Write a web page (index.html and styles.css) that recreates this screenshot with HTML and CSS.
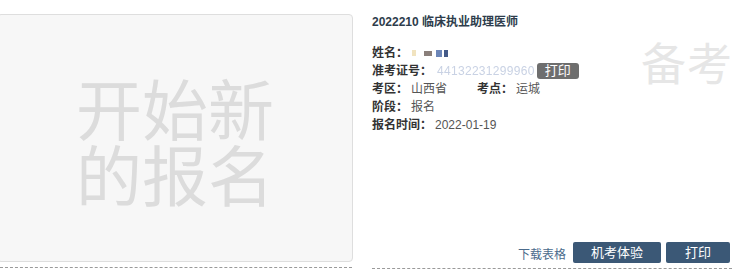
FILE: index.html
```html
<!DOCTYPE html>
<html lang="zh">
<head>
<meta charset="utf-8">
<link rel="stylesheet" href="styles.css">
</head>
<body>
<div class="page">
  <div class="left">
    <div class="newbox"><span class="newtext">开始新<br>的报名</span></div>
    <div class="dash"></div>
  </div>
  <div class="right">
    <div class="watermark">备考</div>
    <div class="title">2022210 临床执业助理医师</div>
    <div class="rows">
      <div class="row"><span class="lab">姓名：</span><span class="blur name"><i class="b1"></i><i class="b2"></i><i class="b3"></i><i class="b4"></i></span></div>
      <div class="row"><span class="lab">准考证号：</span><span class="blur idno">44132231299960</span><span class="badge">打印</span></div>
      <div class="row"><span class="lab">考区：</span><span class="val area">山西省</span><span class="lab">考点：</span><span class="val">运城</span></div>
      <div class="row"><span class="lab">阶段：</span><span class="val">报名</span></div>
      <div class="row"><span class="lab">报名时间：</span><span class="val">2022-01-19</span></div>
    </div>
    <div class="actions">
      <a class="link">下载表格</a>
      <span class="btn wide">机考体验</span>
      <span class="btn">打印</span>
    </div>
    <div class="dash"></div>
  </div>
</div>
</body>
</html>
```
FILE: styles.css
```css
html, body {
  margin: 0;
  padding: 0;
  background: #fff;
  overflow: hidden;
}
body {
  font-family: "Liberation Sans", "Noto Sans CJK SC", sans-serif;
  font-size: 12px;
  color: #333;
}
.page {
  display: grid;
  grid-template-columns: 352px 360px;
  column-gap: 20px;
  height: 271px;
}
.left {
  display: flex;
  flex-direction: column;
  padding-top: 14px;
}
.newbox {
  margin-left: -3px;
  width: 354px;
  height: 246px;
  border: 1px solid #dedede;
  border-radius: 4px;
  background: #f7f7f7;
  display: flex;
  align-items: center;
  justify-content: center;
}
.newtext {
  font-family: "Noto Sans CJK SC", sans-serif;
  font-size: 66px;
  line-height: 66px;
  color: #dcdcdc;
  margin-top: 2px;
  margin-left: 0;
}
.dash {
  margin-top: 5px;
  border-top: 1px dashed #9a9a9a;
  height: 0;
}
.left .dash { width: 352px; }
.right {
  position: relative;
  display: flex;
  flex-direction: column;
}
.watermark {
  position: absolute;
  left: 269px;
  top: 32px;
  white-space: nowrap;
  font-family: "Noto Sans CJK SC", sans-serif;
  font-size: 45px;
  line-height: 60px;
  color: #e6e6e6;
  letter-spacing: 1px;
}
.title {
  margin-top: 13px;
  line-height: 18px;
  font-weight: bold;
  color: #2e3d4c;
  position: relative;
}
.rows {
  margin-top: 13px;
  position: relative;
}
.row {
  height: 18px;
  line-height: 18px;
  display: flex;
  align-items: center;
  white-space: nowrap;
}
.lab {
  font-weight: bold;
  color: #333;
  margin-right: 3px;
}
.val { color: #555; }
.area { width: 66px; }
.name {
  display: inline-flex;
  align-items: center;
  gap: 2px;
  margin-left: 1px;
  filter: blur(0.6px);
}
.name i {
  display: inline-block;
  height: 6px;
}
.name .b1 { width: 4px; background: #f1e3bf; }
.name .b2 { width: 8px; background: #8a7f7a; height: 5px; margin-left: 6px; }
.name .b3 { width: 6px; background: #6c86b8; height: 7px; margin-left: 2px; }
.name .b4 { width: 4px; background: #445a88; height: 7px; }
.idno {
  color: #c9d2e4;
  filter: blur(0.7px);
  letter-spacing: 0.3px;
  margin-left: 2px;
}
.badge {
  margin-left: 2px;
  background: #6e6e6e;
  color: #fff;
  border-radius: 3px;
  padding: 0 8px;
  font-size: 13px;
  line-height: 16px;
  height: 16px;
}
.actions {
  margin-top: auto;
  display: flex;
  justify-content: flex-end;
  align-items: center;
  gap: 5px;
  padding-right: 2px;
}
.link {
  color: #4b6b8c;
  font-size: 12px;
  margin-right: 2px;
  margin-top: 1px;
}
.btn {
  background: #3b5876;
  color: #fff;
  font-size: 13px;
  height: 21px;
  line-height: 21px;
  width: 64px;
  text-align: center;
  border-radius: 2px;
}
.btn.wide { width: 88px; }
.right .dash { width: 360px; margin-bottom: 2px; }
```
